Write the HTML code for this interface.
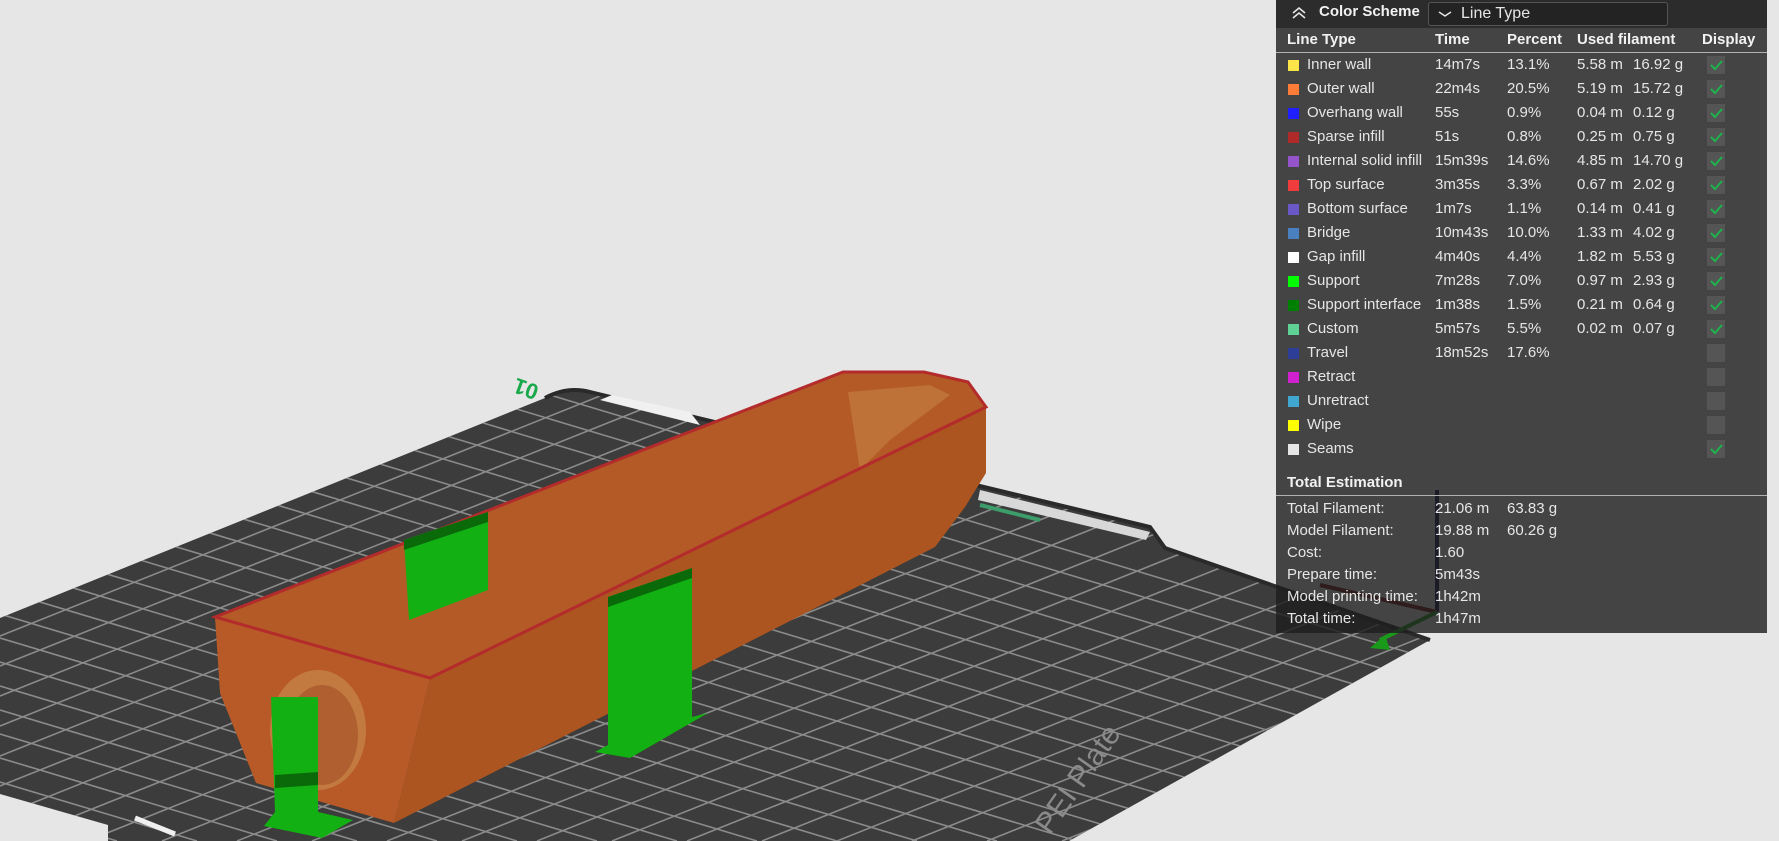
<!DOCTYPE html>
<html><head><meta charset="utf-8">
<style>
html,body{margin:0;padding:0;width:1779px;height:841px;overflow:hidden;background:#e6e6e6;font-family:"Liberation Sans",sans-serif;}
#scene{position:absolute;left:0;top:0;overflow:hidden}
#panel{position:absolute;left:1276px;top:0;width:491px;height:633px;background:rgba(30,30,30,0.81);color:#e6e6e6;font-size:15px;}
.hdr{position:absolute;left:0;top:0;width:491px;height:28px;background:#2c2c2c;}
.t{position:absolute;white-space:nowrap;line-height:18px;}
.b{font-weight:bold;color:#f2f2f2}
.sw{position:absolute;width:11px;height:11px;}
.cb{position:absolute;width:18px;height:18px;background:#555;left:431px;}
.cb svg{position:absolute;left:2px;top:3px}
.hl{position:absolute;left:0;width:491px;height:1px;background:#b0b0b0;}
</style></head><body>
<svg id="scene" width="1779" height="841" viewBox="0 0 1779 841">
<defs>
<clipPath id="pc"><path d="M545 398 Q567 386 590 392 L1150 527 L1165 548 L1430 640 L1069 841 L108 841 L108 825 L0 794 L0 618 Z"/></clipPath>
</defs>
<path d="M545 398 Q567 386 590 392 L1150 527 L1165 548 L1430 640 L1069 841 L108 841 L108 825 L0 794 L0 618 Z" fill="#3b3c3b"/>
<g clip-path="url(#pc)" stroke="#8a8b8a" stroke-width="1.6" fill="none">
<path d="M0 230L1450 665M0 254L1450 689M0 278L1450 713M0 302L1450 737M0 326L1450 761M0 350L1450 785M0 374L1450 809M0 398L1450 833M0 422L1397 841M0 446L1317 841M0 470L1237 841M0 494L1157 841M0 518L1077 841M0 542L997 841M0 566L917 841M0 590L837 841M0 614L757 841M0 638L677 841M0 662L597 841M0 686L517 841M0 710L437 841M0 734L357 841M0 758L277 841M0 782L197 841M0 806L117 841M0 830L37 841"/>
<path d="M0 636L1450 56M0 666L1450 86M0 696L1450 116M0 726L1450 146M0 756L1450 176M0 786L1450 206M0 816L1450 236M12 841L1450 266M87 841L1450 296M162 841L1450 326M237 841L1450 356M312 841L1450 386M387 841L1450 416M462 841L1450 446M537 841L1450 476M612 841L1450 506M687 841L1450 536M762 841L1450 566M837 841L1450 596M912 841L1450 626M987 841L1450 656M1062 841L1450 686"/>
</g>
<path d="M545 398 Q567 386 590 392 L1150 527 L1165 548 L1430 640" stroke="#2a2a2a" stroke-width="4" fill="none"/>
<path d="M600 400 L700 425 L690 412 L612 395Z" fill="#f0f0f0"/>
<path d="M980 490 L1150 532 L1146 540 L978 500Z" fill="#d8d8d8"/>
<path d="M980 505 L1040 520" stroke="#3c9c6a" stroke-width="4"/>
<path d="M135 818 L175 834" stroke="#f0f0f0" stroke-width="5"/>
<text x="0" y="0" transform="translate(540,386) rotate(200)" fill="#19a84a" font-size="22" font-weight="bold" font-family="Liberation Sans">01</text>
<text x="0" y="0" transform="translate(1050,836) rotate(-55)" fill="#8a8a8a" font-size="30" font-family="Liberation Sans">PEI Plate</text>
<path d="M215 617 L843 372 L924 372 L968 382 L986 407 L430 678 Z" fill="#b35a26"/>
<path d="M848 392 L930 385 L950 395 L890 440 L860 470Z" fill="#c98a4a" opacity="0.5"/>
<path d="M430 678 L986 407 L986 473 L965 507 L935 547 L394 823 Z" fill="#ad5520"/>
<path d="M215 617 L430 678 L394 823 L256 783 L220 693 Z" fill="#b85a28"/>
<ellipse cx="318" cy="730" rx="48" ry="60" fill="#c27a40"/>
<ellipse cx="322" cy="735" rx="36" ry="50" fill="#b06030"/>
<path d="M215 617 L843 372 L924 372 L968 382 L986 407 L430 678 Z" fill="none" stroke="#b32b2b" stroke-width="3"/>
<path d="M404 540 L488 512 L488 590 L409 620 Z" fill="#12b012"/>
<path d="M404 540 L488 512 L488 522 L404 550 Z" fill="#0a6a0a"/>
<path d="M608 597 L692 568 L692 717 L708 713 L630 758 L595 752 L608 745 Z" fill="#12b012"/>
<path d="M608 597 L692 568 L692 578 L608 607 Z" fill="#0a6a0a"/>
<path d="M271 697 L318 697 L318 812 L353 820 L322 838 L264 826 L275 812 Z" fill="#12b012"/>
<path d="M275 775 L318 772 L318 785 L275 788 Z" fill="#0a6a0a"/>
<path d="M1437 490 L1437 612" stroke="#1a1a5a" stroke-width="4"/>
<path d="M1437 612 L1320 585" stroke="#7a1a1a" stroke-width="4"/>
<path d="M1437 612 L1380 640" stroke="#1a9a1a" stroke-width="4"/>
<path d="M1370 648 L1385 635 L1390 650Z" fill="#1a9a1a"/>
</svg>
<div id="panel">
<div class="hdr"></div>
<svg style="position:absolute;left:14px;top:5px" width="18" height="16" viewBox="0 0 18 16"><path d="M3 8 L9 3 L15 8 M3 13 L9 8 L15 13" stroke="#e6e6e6" stroke-width="1.6" fill="none"/></svg>
<div class="t b" style="left:43px;top:3px">Color Scheme</div>
<div style="position:absolute;left:152px;top:2px;width:238px;height:22px;background:#232323;border:1px solid #555;border-radius:3px"></div>
<svg style="position:absolute;left:162px;top:10px" width="14" height="8" viewBox="0 0 14 8"><path d="M1 2 L7 6 L13 2" stroke="#e6e6e6" stroke-width="1.4" fill="none"/></svg>
<div class="t" style="left:185px;top:5px;font-size:16px">Line Type</div>
<div class="t b" style="left:11px;top:31px">Line Type</div>
<div class="t b" style="left:159px;top:31px">Time</div>
<div class="t b" style="left:231px;top:31px">Percent</div>
<div class="t b" style="left:301px;top:31px">Used filament</div>
<div class="t b" style="left:426px;top:31px">Display</div>
<div class="hl" style="top:52px"></div>

<div class="sw" style="left:12px;top:60px;background:#ffe44a"></div><div class="t" style="left:31px;top:56px">Inner wall</div><div class="t" style="left:159px;top:56px">14m7s</div><div class="t" style="left:231px;top:56px">13.1%</div><div class="t" style="left:301px;top:56px">5.58 m</div><div class="t" style="left:357px;top:56px">16.92 g</div><div class="cb" style="top:56px"><svg width="14" height="12"><path d="M2 6 L6 10 L13 2" stroke="#1db34a" stroke-width="2" fill="none"/></svg></div>
<div class="sw" style="left:12px;top:84px;background:#ff7d38"></div><div class="t" style="left:31px;top:80px">Outer wall</div><div class="t" style="left:159px;top:80px">22m4s</div><div class="t" style="left:231px;top:80px">20.5%</div><div class="t" style="left:301px;top:80px">5.19 m</div><div class="t" style="left:357px;top:80px">15.72 g</div><div class="cb" style="top:80px"><svg width="14" height="12"><path d="M2 6 L6 10 L13 2" stroke="#1db34a" stroke-width="2" fill="none"/></svg></div>
<div class="sw" style="left:12px;top:108px;background:#1f1fff"></div><div class="t" style="left:31px;top:104px">Overhang wall</div><div class="t" style="left:159px;top:104px">55s</div><div class="t" style="left:231px;top:104px">0.9%</div><div class="t" style="left:301px;top:104px">0.04 m</div><div class="t" style="left:357px;top:104px">0.12 g</div><div class="cb" style="top:104px"><svg width="14" height="12"><path d="M2 6 L6 10 L13 2" stroke="#1db34a" stroke-width="2" fill="none"/></svg></div>
<div class="sw" style="left:12px;top:132px;background:#b02a2a"></div><div class="t" style="left:31px;top:128px">Sparse infill</div><div class="t" style="left:159px;top:128px">51s</div><div class="t" style="left:231px;top:128px">0.8%</div><div class="t" style="left:301px;top:128px">0.25 m</div><div class="t" style="left:357px;top:128px">0.75 g</div><div class="cb" style="top:128px"><svg width="14" height="12"><path d="M2 6 L6 10 L13 2" stroke="#1db34a" stroke-width="2" fill="none"/></svg></div>
<div class="sw" style="left:12px;top:156px;background:#9654cc"></div><div class="t" style="left:31px;top:152px">Internal solid infill</div><div class="t" style="left:159px;top:152px">15m39s</div><div class="t" style="left:231px;top:152px">14.6%</div><div class="t" style="left:301px;top:152px">4.85 m</div><div class="t" style="left:357px;top:152px">14.70 g</div><div class="cb" style="top:152px"><svg width="14" height="12"><path d="M2 6 L6 10 L13 2" stroke="#1db34a" stroke-width="2" fill="none"/></svg></div>
<div class="sw" style="left:12px;top:180px;background:#f03c3c"></div><div class="t" style="left:31px;top:176px">Top surface</div><div class="t" style="left:159px;top:176px">3m35s</div><div class="t" style="left:231px;top:176px">3.3%</div><div class="t" style="left:301px;top:176px">0.67 m</div><div class="t" style="left:357px;top:176px">2.02 g</div><div class="cb" style="top:176px"><svg width="14" height="12"><path d="M2 6 L6 10 L13 2" stroke="#1db34a" stroke-width="2" fill="none"/></svg></div>
<div class="sw" style="left:12px;top:204px;background:#6a58c8"></div><div class="t" style="left:31px;top:200px">Bottom surface</div><div class="t" style="left:159px;top:200px">1m7s</div><div class="t" style="left:231px;top:200px">1.1%</div><div class="t" style="left:301px;top:200px">0.14 m</div><div class="t" style="left:357px;top:200px">0.41 g</div><div class="cb" style="top:200px"><svg width="14" height="12"><path d="M2 6 L6 10 L13 2" stroke="#1db34a" stroke-width="2" fill="none"/></svg></div>
<div class="sw" style="left:12px;top:228px;background:#4a80c0"></div><div class="t" style="left:31px;top:224px">Bridge</div><div class="t" style="left:159px;top:224px">10m43s</div><div class="t" style="left:231px;top:224px">10.0%</div><div class="t" style="left:301px;top:224px">1.33 m</div><div class="t" style="left:357px;top:224px">4.02 g</div><div class="cb" style="top:224px"><svg width="14" height="12"><path d="M2 6 L6 10 L13 2" stroke="#1db34a" stroke-width="2" fill="none"/></svg></div>
<div class="sw" style="left:12px;top:252px;background:#ffffff"></div><div class="t" style="left:31px;top:248px">Gap infill</div><div class="t" style="left:159px;top:248px">4m40s</div><div class="t" style="left:231px;top:248px">4.4%</div><div class="t" style="left:301px;top:248px">1.82 m</div><div class="t" style="left:357px;top:248px">5.53 g</div><div class="cb" style="top:248px"><svg width="14" height="12"><path d="M2 6 L6 10 L13 2" stroke="#1db34a" stroke-width="2" fill="none"/></svg></div>
<div class="sw" style="left:12px;top:276px;background:#00ff00"></div><div class="t" style="left:31px;top:272px">Support</div><div class="t" style="left:159px;top:272px">7m28s</div><div class="t" style="left:231px;top:272px">7.0%</div><div class="t" style="left:301px;top:272px">0.97 m</div><div class="t" style="left:357px;top:272px">2.93 g</div><div class="cb" style="top:272px"><svg width="14" height="12"><path d="M2 6 L6 10 L13 2" stroke="#1db34a" stroke-width="2" fill="none"/></svg></div>
<div class="sw" style="left:12px;top:300px;background:#008000"></div><div class="t" style="left:31px;top:296px">Support interface</div><div class="t" style="left:159px;top:296px">1m38s</div><div class="t" style="left:231px;top:296px">1.5%</div><div class="t" style="left:301px;top:296px">0.21 m</div><div class="t" style="left:357px;top:296px">0.64 g</div><div class="cb" style="top:296px"><svg width="14" height="12"><path d="M2 6 L6 10 L13 2" stroke="#1db34a" stroke-width="2" fill="none"/></svg></div>
<div class="sw" style="left:12px;top:324px;background:#5ed194"></div><div class="t" style="left:31px;top:320px">Custom</div><div class="t" style="left:159px;top:320px">5m57s</div><div class="t" style="left:231px;top:320px">5.5%</div><div class="t" style="left:301px;top:320px">0.02 m</div><div class="t" style="left:357px;top:320px">0.07 g</div><div class="cb" style="top:320px"><svg width="14" height="12"><path d="M2 6 L6 10 L13 2" stroke="#1db34a" stroke-width="2" fill="none"/></svg></div>
<div class="sw" style="left:12px;top:348px;background:#2e3e98"></div><div class="t" style="left:31px;top:344px">Travel</div><div class="t" style="left:159px;top:344px">18m52s</div><div class="t" style="left:231px;top:344px">17.6%</div><div class="cb" style="top:344px"></div>
<div class="sw" style="left:12px;top:372px;background:#d020d0"></div><div class="t" style="left:31px;top:368px">Retract</div><div class="cb" style="top:368px"></div>
<div class="sw" style="left:12px;top:396px;background:#40a8d0"></div><div class="t" style="left:31px;top:392px">Unretract</div><div class="cb" style="top:392px"></div>
<div class="sw" style="left:12px;top:420px;background:#ffff00"></div><div class="t" style="left:31px;top:416px">Wipe</div><div class="cb" style="top:416px"></div>
<div class="sw" style="left:12px;top:444px;background:#e6e6e6"></div><div class="t" style="left:31px;top:440px">Seams</div><div class="cb" style="top:440px"><svg width="14" height="12"><path d="M2 6 L6 10 L13 2" stroke="#1db34a" stroke-width="2" fill="none"/></svg></div>

<div class="t b" style="left:11px;top:474px">Total Estimation</div>
<div class="hl" style="top:495px"></div>
<div class="t" style="left:11px;top:500px">Total Filament:</div><div class="t" style="left:159px;top:500px">21.06 m</div><div class="t" style="left:231px;top:500px">63.83 g</div>
<div class="t" style="left:11px;top:522px">Model Filament:</div><div class="t" style="left:159px;top:522px">19.88 m</div><div class="t" style="left:231px;top:522px">60.26 g</div>
<div class="t" style="left:11px;top:544px">Cost:</div><div class="t" style="left:159px;top:544px">1.60</div>
<div class="t" style="left:11px;top:566px">Prepare time:</div><div class="t" style="left:159px;top:566px">5m43s</div>
<div class="t" style="left:11px;top:588px">Model printing time:</div><div class="t" style="left:159px;top:588px">1h42m</div>
<div class="t" style="left:11px;top:610px">Total time:</div><div class="t" style="left:159px;top:610px">1h47m</div>
</div>
</body></html>
